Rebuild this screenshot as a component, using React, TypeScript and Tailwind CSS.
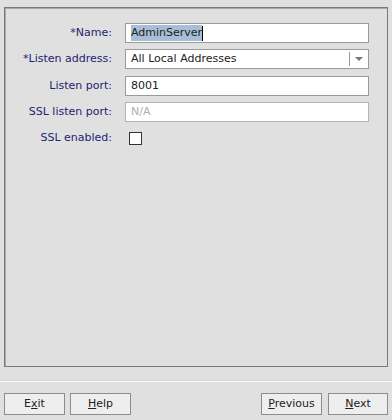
import React from "react";

const font = { fontFamily: '"DejaVu Sans", sans-serif' };

function Label({ children }: { children: React.ReactNode }) {
  return (
    <div className="w-[107px] shrink-0 text-right text-[11px] leading-[20px] text-[#232370]">
      {children}
    </div>
  );
}

function Btn({ children, w }: { children: React.ReactNode; w: string }) {
  return (
    <div
      className={`${w} h-[22px] border border-[#8c8c8c] bg-[#eeeeee] flex items-center justify-center text-[11px] text-[#222]`}
    >
      {children}
    </div>
  );
}

export default function App() {
  return (
    <div
      className="w-[392px] h-[420px] bg-[#e0e0e0] flex flex-col overflow-hidden"
      style={font}
    >
      <div className="ml-[4px] mt-[7px] w-[384px] h-[360px] border border-[#7a7a7a] shadow-[inset_1px_1px_0_#a8a8a8] pt-[15px] flex flex-col">
        {/* Name */}
        <div className="flex items-center h-[20px]">
          <Label>*Name:</Label>
          <div className="ml-[13px] w-[244px] h-[20px] border border-[#9a9a9a] bg-white flex items-center pl-[5px] text-[11px] text-[#222]">
            <span className="bg-[#a8bed6] leading-[16px]">AdminServer</span>
            <span className="w-[1px] h-[15px] bg-black"></span>
          </div>
        </div>
        {/* Listen address */}
        <div className="flex items-center h-[20px] mt-[6px]">
          <Label>*Listen address:</Label>
          <div className="ml-[13px] w-[244px] h-[20px] border border-[#9a9a9a] bg-white flex items-center text-[11px] text-[#222]">
            <span className="pl-[5px] flex-1">All Local Addresses</span>
            <span className="w-[1px] h-[14px] bg-[#9a9a9a]"></span>
            <span className="w-[18px] flex items-center justify-center">
              <svg width="8" height="5" viewBox="0 0 8 5">
                <polygon points="0,0 8,0 4,4" fill="#777" />
              </svg>
            </span>
          </div>
        </div>
        {/* Listen port */}
        <div className="flex items-center h-[20px] mt-[7px]">
          <Label>Listen port:</Label>
          <div className="ml-[13px] w-[244px] h-[20px] border border-[#9a9a9a] bg-white flex items-center pl-[5px] text-[11px] text-[#222]">
            8001
          </div>
        </div>
        {/* SSL listen port */}
        <div className="flex items-center h-[20px] mt-[6px]">
          <Label>SSL listen port:</Label>
          <div className="ml-[13px] w-[244px] h-[20px] border border-[#b4b4b4] bg-white flex items-center pl-[5px] text-[11px] text-[#b0b0b0]">
            N/A
          </div>
        </div>
        {/* SSL enabled */}
        <div className="flex items-center h-[20px] mt-[6px]">
          <Label>SSL enabled:</Label>
          <div className="ml-[17px] w-[13px] h-[13px] border border-[#333] bg-white"></div>
        </div>
      </div>

      <div className="mt-[13px] h-[1px] bg-[#d2d2d2]"></div>
      <div className="h-[1px] bg-white"></div>

      <div className="mt-[11px] flex px-[4px]">
        <Btn w="w-[61px]">
          <span>
            E<u>x</u>it
          </span>
        </Btn>
        <div className="ml-[5px]">
          <Btn w="w-[61px]">
            <span>
              <u>H</u>elp
            </span>
          </Btn>
        </div>
        <div className="ml-auto flex">
          <Btn w="w-[61px]">
            <span>
              <u>P</u>revious
            </span>
          </Btn>
          <div className="ml-[6px]">
            <Btn w="w-[60px]">
              <span>
                <u>N</u>ext
              </span>
            </Btn>
          </div>
        </div>
      </div>
    </div>
  );
}
